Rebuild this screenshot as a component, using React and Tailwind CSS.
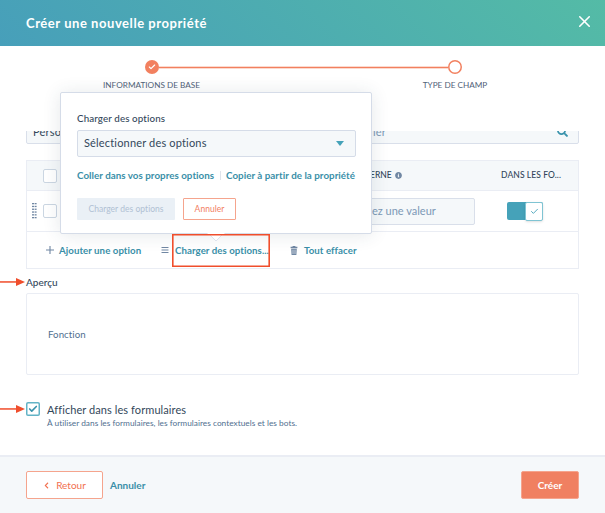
import { Check, X } from 'lucide-react';
import { FaBars, FaChevronLeft, FaInfoCircle, FaSearch } from 'react-icons/fa';

function Header() {
  return (
    <header className="flex h-[46px] shrink-0 items-center justify-between bg-[linear-gradient(45deg,#479fba_0%,#54bba6_100%)] pr-[11px] pl-[26px]">
      <h1 className="mt-px text-[13px] font-bold tracking-[0.55px] text-white">Créer une nouvelle propriété</h1>
      <X className="mb-[3px] size-[19px] text-white" strokeWidth={2} />
    </header>
  );
}

function Stepper() {
  return (
    <div className="h-[85px] shrink-0 pt-[14px]">
      <div className="flex items-center pr-[143px] pl-[145px]">
        <span className="flex size-[14px] items-center justify-center rounded-full bg-[#f2805f]">
          <Check className="size-[8px] text-white" strokeWidth={3.5} />
        </span>
        <span className="h-px flex-1 bg-[#f2805f] shadow-[0_0_0_0.3px_#f2805f]" />
        <span className="size-[14px] rounded-full bg-white shadow-[inset_0_0_0_1.5px_#f2805f]" />
      </div>
      <div className="mt-[4px] flex justify-between pr-[100px] pl-[85px] text-[8.2px] leading-[14px] text-[#516278]">
        <span className="w-[133px] text-center">INFORMATIONS DE BASE</span>
        <span className="w-[100px] text-center">TYPE DE CHAMP</span>
      </div>
    </div>
  );
}

function FilterBar() {
  return (
    <div className="flex h-[13px] shrink-0 items-end overflow-hidden text-[11px] leading-[25px]">
      <div className="flex h-[26px] w-[200px] rounded-[2px] border border-[#d9dfea] bg-[#f5f8fa] pl-[6px] tracking-[0.2px] text-[#33475b]">Perso</div>
      <div className="flex h-[26px] flex-1 items-center justify-between rounded-[2px] border border-[#d9dfea] bg-[#f5f8fa] pr-[10px] pl-[146px] tracking-[0.2px] text-[#7c98b6]">
        <span>ier</span>
        <FaSearch className="size-[11px] text-[#3a93ac]" />
      </div>
    </div>
  );
}

function EmptyBox() {
  return <span className="block size-[14px] rounded-[2px] border border-[#cbd6e2] bg-white" />;
}

// dotted drag handle, two columns
function DragHandle() {
  return (
    <svg className="h-[16px] w-[5px]" viewBox="0 0 5 16">
      {[0, 2.8, 5.6, 8.4, 11.2, 14].map((y) => (
        <g key={y} fill="#7087a3">
          <rect x="0" y={y} width="2" height="1.3" />
          <rect x="2.6" y={y} width="2" height="1.3" />
        </g>
      ))}
    </svg>
  );
}

function TrashIcon() {
  return (
    <svg className="h-[9px] w-[8px]" viewBox="0 0 8 9" fill="#7087a3">
      <path d="M2.6 0h2.8v.8h2v1.4H.6V.8h2z" />
      <path d="M1.2 2.8h5.6L6.4 9H1.6z" />
      <path d="M3 3.6v4.4M5 3.6v4.4" stroke="#fff" strokeWidth="0.6" />
    </svg>
  );
}

function OptionsTable() {
  return (
    <section className="mt-[16px] flex h-[109px] shrink-0 flex-col border border-[#eaedf4] text-[#33475b]">
      <div className="flex h-[30px] items-center border-b border-[#eaedf4] bg-[#f5f8fa] pr-[17px] pl-[16px] text-[8.5px] font-medium">
        <EmptyBox />
        <span className="ml-[313px] flex items-center gap-[3px]">
          ERNE <FaInfoCircle className="size-[7px] text-[#7087a3]" />
        </span>
        <span className="ml-auto tracking-[0.08px]">DANS LES FO...</span>
      </div>
      <div className="flex h-[41px] items-center border-b border-[#eaedf4] pr-[35px] pl-[5px]">
        <DragHandle />
        <span className="ml-[6px]">
          <EmptyBox />
        </span>
        <div className="ml-[230px] flex h-[27px] w-[188px] items-center rounded-[2px] border border-[#d9dfea] bg-[#f5f8fa] pt-px pl-[84px] text-[11px] text-[#7c98b6]">
          ez une valeur
        </div>
        <div className="ml-auto flex h-[18px] w-[36px] justify-end rounded-[2px] bg-[#45a2b9]">
          <span className="flex h-[19px] w-[18px] items-center justify-center rounded-[2px] border border-[#7fc4d3] bg-white shadow-sm">
            <Check className="size-[9px] text-[#45a2b9]" strokeWidth={2.4} />
          </span>
        </div>
      </div>
      <div className="flex flex-1 items-center pl-[19px] text-[9.7px] font-bold tracking-[0.05px] text-[#3a8fa8]">
        <svg className="size-[8px]" viewBox="0 0 8 8" stroke="#7087a3" strokeWidth="1.1">
          <path d="M4 0v8M0 4h8" />
        </svg>
        <span className="ml-[5px] w-[102px]">Ajouter une option</span>
        <FaBars className="size-[8px] text-[#7087a3]" />
        <span className="ml-[6px] w-[115px]">Charger des options...</span>
        <TrashIcon />
        <span className="ml-[6px]">Tout effacer</span>
      </div>
    </section>
  );
}

function LoadOptionsPopover() {
  return (
    <div className="absolute top-[92px] left-[60px] h-[142px] w-[312px] rounded-[2px] border border-[#d5dce8] bg-white px-[16px] pt-[18px] shadow-[0_1px_18px_rgba(45,62,80,0.12)]">
      <p className="text-[9.8px] leading-[14px] font-medium tracking-[0.1px] text-[#33475b]">Charger des options</p>
      <div className="mt-[5px] flex h-[27px] w-[279px] items-center justify-between rounded-[2px] border border-[#d5dce8] bg-[#f5f8fa] pr-[11px] pl-[6px] text-[11px] tracking-[0.17px] text-[#33475b]">
        <span>Sélectionner des options</span>
        <span className="border-x-[4px] border-t-[5px] border-x-transparent border-t-[#45a2b9]" />
      </div>
      <div className="mt-[11px] flex h-[15px] w-[278px] items-center justify-between text-[9.8px] font-bold tracking-[0.03px] text-[#3a8fa8]">
        <span>Coller dans vos propres options</span>
        <span className="h-[9px] w-px bg-[#dfe3eb]" />
        <span>Copier à partir de la propriété</span>
      </div>
      <div className="mt-[15px] flex gap-[8px] text-[8.5px] tracking-[0.03px]">
        <div className="flex h-[22px] w-[98px] items-center justify-center rounded-[1px] bg-[#eaf0f6] text-[#b0c1d4]">Charger des options</div>
        <div className="flex h-[22px] w-[53px] items-center justify-center rounded-[1px] border border-[#f5a48d] text-[#f2805f]">Annuler</div>
      </div>
      <svg className="absolute top-[140px] left-[146px] h-[9px] w-[18px]" viewBox="0 0 18 9">
        <path d="M0 0h18L9 8z" fill="#fff" />
        <path d="M2 1l7 7 7-7" fill="none" stroke="#d5dce8" strokeWidth="0.8" />
      </svg>
    </div>
  );
}

function Preview() {
  return (
    <section className="mt-[5px] shrink-0">
      <h2 className="text-[10px] leading-[16px] font-medium text-[#33475b]">Aperçu</h2>
      <div className="mt-[3px] flex h-[82px] items-center rounded-[2px] border border-[#eaedf4] pl-[21px] text-[9.7px] tracking-[0.05px] text-[#516f90]">Fonction</div>
    </section>
  );
}

function FormsCheckbox() {
  return (
    <div className="mt-[27px] flex gap-[7px]">
      <span className="flex size-[14px] items-center justify-center rounded-[2px] bg-white shadow-[inset_0_0_0_1.5px_#62b3c6]">
        <Check className="size-[10px] text-[#3a93ac]" strokeWidth={4} />
      </span>
      <div>
        <p className="text-[11px] leading-[15px] tracking-[0.08px] text-[#33475b]">Afficher dans les formulaires</p>
        <p className="text-[8.3px] leading-[12px] tracking-[0.02px] text-[#516f90]">À utiliser dans les formulaires, les formulaires contextuels et les bots.</p>
      </div>
    </div>
  );
}

function Footer() {
  return (
    <footer className="flex h-[58px] shrink-0 items-center border-t-2 border-[#eaedf4] bg-[#f5f8fa] pr-[26px] pl-[26px] text-[10px]">
      <div className="flex h-[28px] w-[77px] items-center justify-center gap-[6px] rounded-[2px] border border-[#f5a48d] bg-white text-[#f2704f]">
        <FaChevronLeft className="size-[7px]" />
        Retour
      </div>
      <span className="ml-[7px] font-bold text-[#3a8fa8]">Annuler</span>
      <div className="ml-auto flex h-[28px] w-[58px] items-center justify-center rounded-[2px] border border-[#f5a48d] bg-[#f08061] font-bold text-white">Créer</div>
    </footer>
  );
}

function Arrow() {
  return (
    <svg className="h-[8px] w-[25px]" viewBox="0 0 25 8" fill="#f04e2c">
      <rect x="0" y="3.2" width="17" height="1.5" />
      <path d="M16 0l9 4-9 4z" />
    </svg>
  );
}

export default function App() {
  return (
    <div className="relative flex h-[513px] w-[605px] flex-col overflow-hidden bg-white font-['Lato',sans-serif]">
      <Header />
      <Stepper />
      <main className="flex min-h-0 flex-1 flex-col px-[26px]">
        <FilterBar />
        <OptionsTable />
        <Preview />
        <FormsCheckbox />
      </main>
      <Footer />
      <LoadOptionsPopover />
      <div className="absolute top-[234px] left-[172px] h-[33px] w-[98px] shadow-[inset_0_0_0_1.6px_#f04e2c]" />
      <div className="absolute top-[278px] left-0 flex">
        <Arrow />
      </div>
      <div className="absolute top-[405px] left-0 flex">
        <Arrow />
      </div>
    </div>
  );
}
